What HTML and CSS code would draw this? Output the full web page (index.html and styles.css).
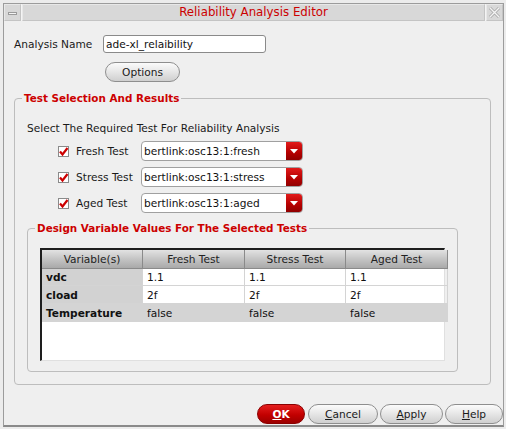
FILE: index.html
```html
<!DOCTYPE html>
<html>
<head>
<meta charset="utf-8">
<link rel="stylesheet" href="styles.css">
</head>
<body>
<div class="window">
  <div class="titlebar">
    <div class="tb-btn"><span class="min-bar"></span></div>
    <div class="tb-title">Reliability Analysis Editor</div>
    <div class="tb-btn">
      <svg width="13" height="13" viewBox="0 0 13 13"><path d="M2 2 L11 11 M11 2 L2 11" stroke="#a8a8a8" stroke-width="3" fill="none"/><path d="M2 2 L11 11 M11 2 L2 11" stroke="#f4f4f4" stroke-width="1.4" fill="none"/></svg>
    </div>
  </div>
  <div class="content">
    <div class="name-row">
      <span class="name-label">Analysis Name</span>
      <div class="textfield">ade-xl_relaibility</div>
    </div>
    <button class="btn options">Options</button>
    <fieldset class="group outer">
      <legend>Test Selection And Results</legend>
      <div class="hint">Select The Required Test For Reliability Analysis</div>
      <div class="tests">
        <div class="test-row">
          <span class="check"><svg width="11" height="11" viewBox="0 0 11 11"><path d="M2 5.5 L4.5 8.5 L9.5 2" stroke="#cc0000" stroke-width="2.2" fill="none"/></svg></span>
          <span class="test-label">Fresh Test</span>
          <div class="combo"><span class="combo-text">bertlink:osc13:1:fresh</span><span class="combo-arrow"><svg width="8" height="5" viewBox="0 0 8 5"><path d="M0 0 H8 L4 4.5 Z" fill="#fff"/></svg></span></div>
        </div>
        <div class="test-row">
          <span class="check"><svg width="11" height="11" viewBox="0 0 11 11"><path d="M2 5.5 L4.5 8.5 L9.5 2" stroke="#cc0000" stroke-width="2.2" fill="none"/></svg></span>
          <span class="test-label">Stress Test</span>
          <div class="combo"><span class="combo-text">bertlink:osc13:1:stress</span><span class="combo-arrow"><svg width="8" height="5" viewBox="0 0 8 5"><path d="M0 0 H8 L4 4.5 Z" fill="#fff"/></svg></span></div>
        </div>
        <div class="test-row">
          <span class="check"><svg width="11" height="11" viewBox="0 0 11 11"><path d="M2 5.5 L4.5 8.5 L9.5 2" stroke="#cc0000" stroke-width="2.2" fill="none"/></svg></span>
          <span class="test-label">Aged Test</span>
          <div class="combo"><span class="combo-text">bertlink:osc13:1:aged</span><span class="combo-arrow"><svg width="8" height="5" viewBox="0 0 8 5"><path d="M0 0 H8 L4 4.5 Z" fill="#fff"/></svg></span></div>
        </div>
      </div>
      <fieldset class="group inner">
        <legend>Design Variable Values For The Selected Tests</legend>
        <div class="table-wrap">
          <table class="grid">
            <thead>
              <tr><th>Variable(s)</th><th>Fresh Test</th><th>Stress Test</th><th>Aged Test</th></tr>
            </thead>
            <tbody>
              <tr class="r1"><td class="var">vdc</td><td>1.1</td><td>1.1</td><td>1.1</td></tr>
              <tr class="r2"><td class="var">cload</td><td>2f</td><td>2f</td><td>2f</td></tr>
              <tr class="r3 sel"><td class="var">Temperature</td><td>false</td><td>false</td><td>false</td></tr>
            </tbody>
          </table>
        </div>
      </fieldset>
    </fieldset>
    <div class="actions">
      <button class="btn ok"><u>O</u>K</button>
      <button class="btn cancel"><u>C</u>ancel</button>
      <button class="btn apply"><u>A</u>pply</button>
      <button class="btn help"><u>H</u>elp</button>
    </div>
  </div>
</div>
</body>
</html>
```

FILE: styles.css
```css
html, body {
  margin: 0;
  padding: 0;
  background: #ececec;
}
body {
  font-family: "DejaVu Sans", sans-serif;
  font-size: 10.6px;
  color: #1a1a1a;
}
.window {
  margin: 3px 0 0 3px;
  width: 501px;
  height: 424px;
  box-sizing: border-box;
  border: 1px solid #9c9c9c;
  border-bottom: 2px solid #8a8a8a;
  background: #efefef;
  display: flex;
  flex-direction: column;
}
.titlebar {
  height: 17px;
  display: flex;
  gap: 1px;
  background: #f4f4f4;
}
.tb-btn {
  width: 17px;
  box-sizing: border-box;
  border: 1px solid #c4c4c4;
  border-top-color: #e8e8e8;
  border-left-color: #e8e8e8;
  background: #d8d8d8;
  display: flex;
  align-items: center;
  justify-content: center;
}
.min-bar {
  width: 9px;
  height: 3px;
  box-sizing: border-box;
  border: 1px solid #9a9a9a;
  background: #f4f4f4;
  margin-top: 2px;
}
.tb-title {
  flex: 1;
  box-sizing: border-box;
  border: 1px solid #c4c4c4;
  border-top-color: #e8e8e8;
  border-left-color: #e8e8e8;
  background: #d8d8d8;
  color: #cc0000;
  font-size: 11.8px;
  line-height: 15px;
  text-align: center;
}
.content {
  padding: 14px 0 0 10px;
  flex: 1;
  display: flex;
  flex-direction: column;
}
.name-row {
  display: flex;
  align-items: center;
  height: 18px;
}
.name-label {
  width: 89px;
}
.textfield {
  width: 163px;
  height: 18px;
  box-sizing: border-box;
  border: 1px solid #8a8a8a;
  border-radius: 3px;
  background: #fff;
  padding: 0 2px;
  line-height: 16px;
  color: #111;
}
.btn {
  font-family: "DejaVu Sans", sans-serif;
  font-size: 10.6px;
  color: #1a1a1a;
  box-sizing: border-box;
  border: 1px solid #8e8e8e;
  border-radius: 10px;
  background: linear-gradient(#fbfbfb, #e6e6e6 50%, #cfcfcf);
  padding: 0;
  margin: 0;
  text-align: center;
}
.options {
  margin: 9px 0 0 91px;
  width: 75px;
  height: 20px;
  align-self: flex-start;
}
.group {
  margin: 0;
  box-sizing: border-box;
  border: 1px solid #bdbdbd;
  border-radius: 4px;
  min-width: 0;
}
.group legend {
  color: #cc0000;
  font-weight: bold;
  font-size: 10.4px;
  line-height: 14px;
  padding: 0 2px;
  margin-left: -5px;
}
.outer {
  margin-top: 9px;
  width: 477px;
  padding: 16px 32px 12px 12px;
}
.hint {
  line-height: 14px;
}
.tests {
  display: flex;
  flex-direction: column;
  gap: 6px;
  margin-top: 6px;
}
.test-row {
  display: flex;
  align-items: center;
  height: 20px;
}
.check {
  width: 11px;
  height: 11px;
  box-sizing: border-box;
  border: 1px solid #8a8a8a;
  background: #fff;
  margin-left: 31px;
  display: flex;
}
.check svg {
  margin: -1px;
}
.test-label {
  margin-left: 7px;
  width: 65px;
}
.combo {
  width: 162px;
  height: 20px;
  box-sizing: border-box;
  border: 1px solid #a0a0a0;
  border-radius: 4px;
  background: #fff;
  display: flex;
  overflow: hidden;
}
.combo-text {
  flex: 1;
  padding-left: 2px;
  line-height: 18px;
  color: #111;
}
.combo-arrow {
  width: 16px;
  background: linear-gradient(#e21b1b, #b40000 60%, #900000);
  display: flex;
  align-items: center;
  justify-content: center;
}
.inner {
  margin-top: 8px;
  width: 431px;
  padding: 13px 12px 10px 12px;
}
.table-wrap {
  height: 113px;
  box-sizing: border-box;
  border-top: 2px solid #1e1e1e;
  border-left: 2px solid #1e1e1e;
  border-right: 1px solid #e0e0e0;
  border-bottom: 1px solid #e0e0e0;
  background: #fff;
}
.grid {
  border-collapse: collapse;
  table-layout: fixed;
  width: 402px;
}
.grid th {
  height: 18px;
  padding: 0;
  font-weight: normal;
  text-align: center;
  background: linear-gradient(#e2e2e2, #c4c4c4 50%, #a9a9a9);
  border-right: 1px solid #8a8a8a;
  border-bottom: 1px solid #8a8a8a;
  color: #222;
}
.grid th:nth-child(1) { width: 100px; }
.grid th:nth-child(2) { width: 101px; }
.grid th:nth-child(3) { width: 100px; }
.grid th:nth-child(4) { width: 101px; }
.grid td {
  padding: 0 0 0 4px;
  border-right: 1px solid #d4d4d4;
  border-bottom: 1px solid #d4d4d4;
  color: #111;
  white-space: nowrap;
}
.grid .r1 td { height: 16px; }
.grid .r2 td { height: 17px; }
.grid .r3 td { height: 17px; }
.grid td.var {
  background: #d2d2d2;
  font-weight: bold;
  padding-left: 4px;
}
.grid tr.sel td {
  background: #d4d4d4;
}
.actions {
  margin-top: auto;
  margin-bottom: 1px;
  display: flex;
  justify-content: flex-end;
  align-items: center;
}
.actions .btn {
  height: 20px;
}
.ok {
  width: 48px;
  background: linear-gradient(#e41e1e, #c20000 55%, #9c0000);
  border-color: #8a0000;
  color: #fff;
  font-weight: bold;
  margin-right: 3px;
}
.cancel { width: 70px; margin-right: 2px; }
.apply { width: 63px; margin-right: 2px; }
.help { width: 58px; }
```
